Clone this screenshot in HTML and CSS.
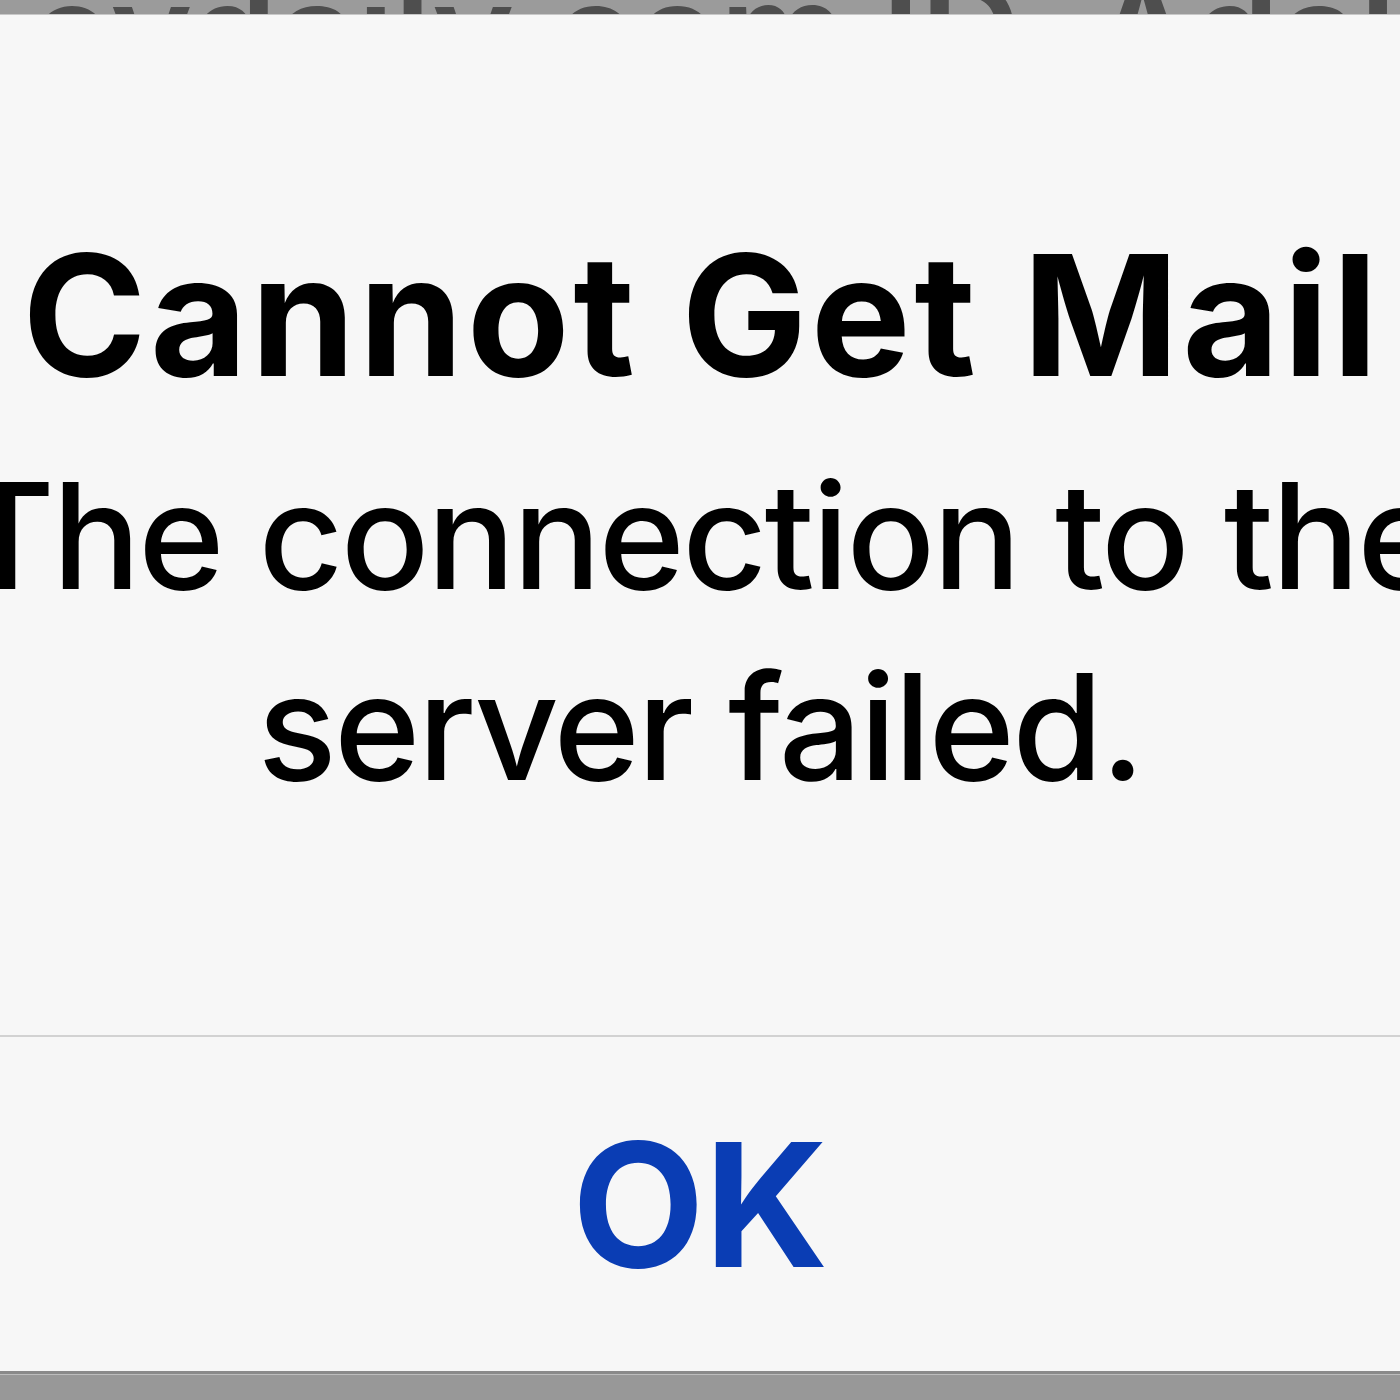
FILE: index.html
```html
<!DOCTYPE html>
<html lang="en">
<head>
<meta charset="utf-8">
<title>Cannot Get Mail</title>
<link rel="stylesheet" href="styles.css">
</head>
<body>
  <div class="backdrop-top"><div class="backdrop-text">evdaily.com ID, Adal</div></div>
  <div class="alert">
    <div class="alert-body">
      <h1 class="alert-title">Cannot Get Mail</h1>
      <p class="alert-message"><span class="line">The connection to the</span><span class="line">server failed.</span></p>
    </div>
    <div class="alert-actions">
      <button class="alert-button">OK</button>
    </div>
  </div>
  <div class="backdrop-bottom"></div>
</body>
</html>
```
FILE: styles.css
```css
html, body {
  margin: 0;
  padding: 0;
}
body {
  width: 1400px;
  height: 1400px;
  overflow: hidden;
  background: #989898;
  font-family: Inter, "Noto Sans", "Liberation Sans", sans-serif;
  display: flex;
  flex-direction: column;
}
.backdrop-top {
  height: 15px;
  flex: 0 0 15px;
  background: #9b9b9b;
  overflow: hidden;
  border-bottom: 1px solid #c8c8c8;
  box-sizing: border-box;
}
.backdrop-text {
  margin-top: -38px;
  padding-left: 30px;
  font-size: 140px;
  line-height: 140px;
  font-weight: 600;
  color: #4e4e4e;
  white-space: nowrap;
}
.alert {
  flex: 0 0 1356px;
  background: #f7f7f7;
  display: flex;
  flex-direction: column;
}
.alert-body {
  height: 1020px;
  box-sizing: border-box;
  padding-top: 216px;
  display: flex;
  flex-direction: column;
  align-items: center;
}
.alert-title {
  margin: 0;
  font-size: 168px;
  line-height: 168px;
  font-weight: 700;
  color: #000;
  white-space: nowrap;
  letter-spacing: 3.4px;
  text-indent: 3.4px;
}
.alert-message {
  margin: 41px 0 0;
  display: flex;
  flex-direction: column;
  align-items: center;
  font-size: 147px;
  line-height: 191px;
  font-weight: 500;
  color: #000;
  letter-spacing: -2.6px;
}
.line {
  white-space: nowrap;
}
.alert-actions {
  flex: 1;
  border-top: 2px solid #d2d2d2;
  display: flex;
  align-items: center;
  justify-content: center;
}
.alert-button {
  background: none;
  border: 0;
  padding: 0;
  font-family: inherit;
  font-size: 172px;
  line-height: 1;
  font-weight: 700;
  color: #0a3db4;
}
.backdrop-bottom {
  flex: 1;
  background: #989898;
  border-top: 3px solid #8a8a8a;
  box-shadow: inset 0 1px 0 #bdbdbd;
}
```
